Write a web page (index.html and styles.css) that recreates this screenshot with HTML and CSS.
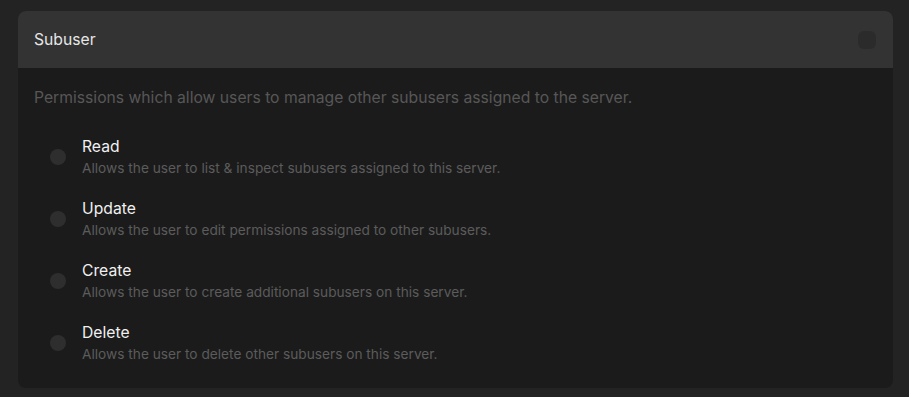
FILE: index.html
```html
<!DOCTYPE html>
<html lang="en">
<head>
  <meta charset="UTF-8" />
  <meta name="viewport" content="width=device-width, initial-scale=1.0" />
  <title>Subuser permissions</title>
  <link rel="stylesheet" href="styles.css">
</head>
<body>
  <div class="card">
    <div class="card-header">
      <h3>Subuser</h3>
      <span class="check check-all"></span>
    </div>
    <div class="card-body">
      <p class="intro">Permissions which allow users to manage other subusers assigned to the server.</p>
      <ul class="perm-list">
        <li class="perm">
          <span class="check"></span>
          <div>
            <div class="perm-title">Read</div>
            <div class="perm-desc">Allows the user to list &amp; inspect subusers assigned to this server.</div>
          </div>
        </li>
        <li class="perm">
          <span class="check"></span>
          <div>
            <div class="perm-title">Update</div>
            <div class="perm-desc">Allows the user to edit permissions assigned to other subusers.</div>
          </div>
        </li>
        <li class="perm">
          <span class="check"></span>
          <div>
            <div class="perm-title">Create</div>
            <div class="perm-desc">Allows the user to create additional subusers on this server.</div>
          </div>
        </li>
        <li class="perm">
          <span class="check"></span>
          <div>
            <div class="perm-title">Delete</div>
            <div class="perm-desc">Allows the user to delete other subusers on this server.</div>
          </div>
        </li>
      </ul>
    </div>
  </div>
</body>
</html>
```

FILE: styles.css
```css
body {
  margin: 0;
  padding: 11px 16px 10px 18px;
  background: #232323;
  font-family: 'Inter', 'Open Sans', sans-serif;
}

.card {
  border-radius: 8px;
  overflow: hidden;
  background: #1b1b1b;
}

.card-header {
  display: flex;
  align-items: center;
  justify-content: space-between;
  height: 57px;
  padding: 0 17px 0 16px;
  background: #333333;
}

.card-header h3 {
  margin: 0;
  font-size: 15.7px;
  font-weight: 400;
  color: #e6e6e6;
}

.card-body {
  padding: 18px 16px 23px;
}

.intro {
  margin: 0 0 27px;
  font-size: 15.7px;
  line-height: 24px;
  color: #575757;
}

.perm-list {
  list-style: none;
  margin: 0;
  padding: 0 0 0 16px;
  display: flex;
  flex-direction: column;
  gap: 20px;
}

.perm {
  display: flex;
  align-items: center;
  gap: 16px;
}

.check {
  flex: none;
  width: 16px;
  height: 16px;
  border-radius: 50%;
  background: #2e2e2e;
  margin-top: -2px;
}

.check-all {
  width: 18px;
  height: 18px;
  border-radius: 6px;
  background: #2b2b2b;
  margin-top: 0;
}

.perm-title {
  font-size: 15.7px;
  line-height: 20px;
  color: #f0f0f0;
}

.perm-desc {
  font-size: 13.7px;
  line-height: 22px;
  color: #5c5c5c;
}
```
